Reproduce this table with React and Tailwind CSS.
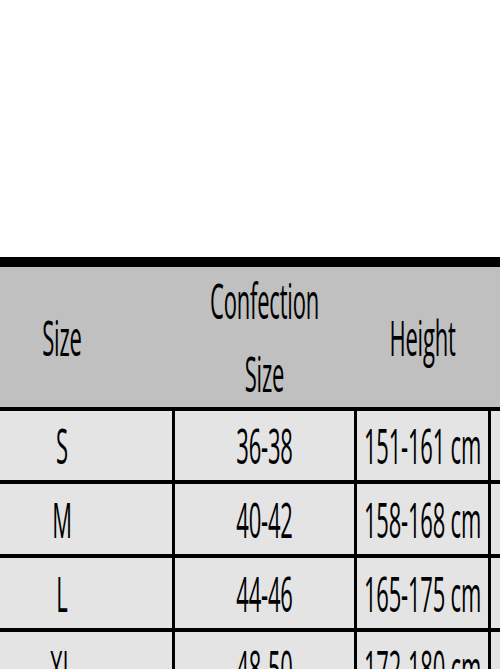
const rows = [
  { size: 'S', conf: '36-38', height: '151-161 cm' },
  { size: 'M', conf: '40-42', height: '158-168 cm' },
  { size: 'L', conf: '44-46', height: '165-175 cm' },
  { size: 'XL', conf: '48-50', height: '172-180 cm' },
];

const cols = 'grid grid-cols-[220px_179px_131px_120px] gap-x-[3px]';

function Txt({ children }) {
  return (
    <div className="inline-block scale-y-[2.2] text-center text-[22px] leading-[33px] font-medium tracking-[-0.2px] text-black">
      {children}
    </div>
  );
}

export default function App() {
  return (
    <div className="w-[500px] h-[669px] overflow-hidden bg-white font-['Open_Sans',sans-serif]">
      <div className="h-[257px]" />
      <div className="-ml-[48px] w-[660px]">
        <div className="h-[10px] bg-black" />
        <div className={`${cols} h-[140px] bg-[#c0c0c0]`}>
          <div className="flex items-center justify-center"><Txt>Size</Txt></div>
          <div className="flex items-center justify-center"><Txt>Confection<br />Size</Txt></div>
          <div className="flex items-center justify-center"><Txt>Height</Txt></div>
          <div />
        </div>
        <div className={`${cols} gap-y-[4px] bg-black pt-[4px]`}>
          {rows.map((r, i) => (
            <div key={r.size} className="contents">
              <div className={`${i === 0 ? 'h-[69px]' : 'h-[70px]'} bg-[#e4e4e4] flex items-center justify-center`}><Txt>{r.size}</Txt></div>
              <div className={`${i === 0 ? 'h-[69px]' : 'h-[70px]'} bg-[#e4e4e4] flex items-center justify-center`}><Txt>{r.conf}</Txt></div>
              <div className={`${i === 0 ? 'h-[69px]' : 'h-[70px]'} bg-[#e4e4e4] flex items-center justify-center`}><Txt>{r.height}</Txt></div>
              <div className={`${i === 0 ? 'h-[69px]' : 'h-[70px]'} bg-[#e4e4e4]`} />
            </div>
          ))}
        </div>
      </div>
    </div>
  );
}
